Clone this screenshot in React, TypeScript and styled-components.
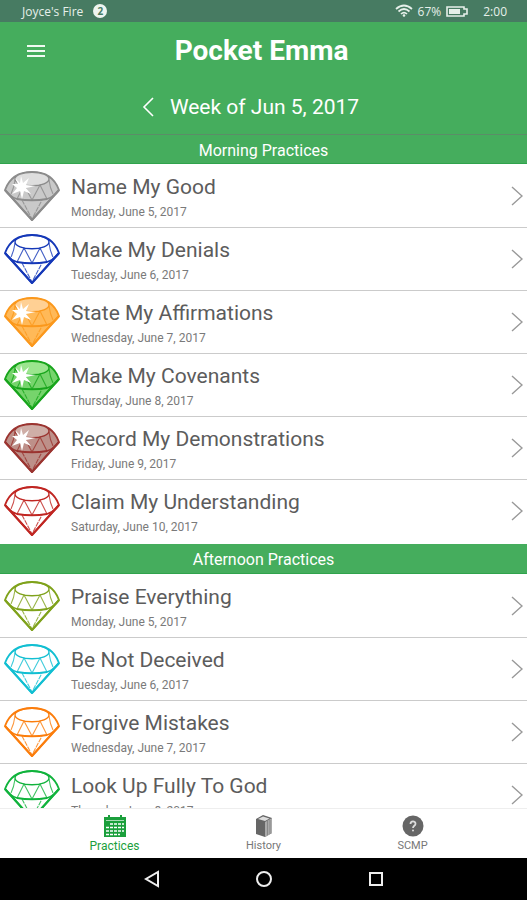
import React from "react";
import styled, { createGlobalStyle } from "styled-components";

const GREEN = "#45ad5d";

const GlobalStyle = createGlobalStyle`
  * { box-sizing: border-box; }
  body { margin: 0; background: #fff; font-family: Roboto, "Liberation Sans", sans-serif; }
  button { font: inherit; border: 0; background: none; padding: 0; cursor: pointer; }
  ul { list-style: none; margin: 0; }
  svg { display: block; }
`;

const Screen = styled.div`
  display: flex;
  flex-direction: column;
  height: 100vh;
`;

const StatusBar = styled.div`
  flex: none;
  display: flex;
  align-items: center;
  justify-content: space-between;
  height: 22px;
  padding: 0 20px 0 22px;
  background: #477b62;
  color: #e6f0ea;
  font-family: "Open Sans", "Noto Sans", sans-serif;
  font-size: 12px;
`;

const StatusGroup = styled.div<{ $gap: number }>`
  display: flex;
  align-items: center;
  gap: ${(p) => p.$gap}px;
`;

const Count = styled.span`
  display: grid;
  place-items: center;
  width: 14px;
  height: 14px;
  border-radius: 50%;
  background: #eef5f0;
  color: #477b62;
  font-size: 10px;
  font-weight: 700;
`;

const Clock = styled.time`
  margin-left: 10px;
`;

const Header = styled.header`
  flex: none;
  background: ${GREEN};
  color: #fff;
`;

const TitleBar = styled.div`
  display: grid;
  grid-template-columns: 72px 1fr 72px;
  align-items: center;
  height: 57px;
`;

const MenuButton = styled.button`
  display: grid;
  place-items: center;
  height: 44px;
  color: #fff;
`;

const Title = styled.h1`
  margin: 0;
  padding-right: 4px;
  text-align: center;
  font-size: 28px;
  line-height: 32px;
  font-weight: 700;
`;

const WeekBar = styled.div`
  display: flex;
  align-items: center;
  justify-content: center;
  gap: 16px;
  height: 55px;
  padding-right: 26px;
`;

const WeekButton = styled.button`
  color: #fff;
`;

const Week = styled.h2`
  margin: 0;
  font-size: 21px;
  line-height: 28px;
  font-weight: 400;
`;

const List = styled.main`
  flex: 1;
  min-height: 0;
  overflow: hidden;
`;

const SectionTitle = styled.h3<{ $ruled?: boolean }>`
  display: flex;
  align-items: center;
  justify-content: center;
  height: 30px;
  margin: 0;
  padding-top: 3px;
  border-top: ${(p) => (p.$ruled ? "1px solid #5b8d68" : "0")};
  border-bottom: 1px solid #2fa34c;
  background: ${GREEN};
  color: #fff;
  font-size: 16px;
  line-height: 20px;
  font-weight: 400;
`;

const Rows = styled.ul`
  padding: 1px 0;
`;

const Row = styled.li`
  border-bottom: 1px solid #cbcbcb;
  &:last-child { border-bottom-color: transparent; }
`;

const RowButton = styled.button`
  display: grid;
  grid-template-columns: 56px 1fr 12px;
  column-gap: 11px;
  align-items: center;
  width: 100%;
  height: 62px;
  padding: 0 4px;
  text-align: left;
`;

const RowText = styled.span`
  display: flex;
  flex-direction: column;
  padding-top: 4px;
`;

const Name = styled.span`
  color: #5c5c5c;
  font-size: 21px;
  line-height: 28px;
`;

const DateLine = styled.span`
  color: #7a7a7a;
  font-size: 12px;
  line-height: 22px;
`;

const TabBar = styled.nav`
  flex: none;
  display: flex;
  justify-content: center;
  height: 50px;
  border-top: 1px solid #eee;
  background: #fff;
  padding: 0 40px;
`;

const Tab = styled.button<{ $active?: boolean }>`
  flex: 1;
  display: flex;
  flex-direction: column;
  align-items: center;
  gap: 1px;
  padding-top: 6px;
  color: ${(p) => (p.$active ? "#1b9f3c" : "#777")};
  font-size: ${(p) => (p.$active ? 12 : 11)}px;
  font-weight: 400;
  line-height: 16px;
`;

const SystemBar = styled.nav`
  flex: none;
  display: flex;
  align-items: center;
  justify-content: center;
  gap: 94px;
  height: 42px;
  background: #000;
`;

interface GemProps {
  line: string;
  fill?: string;
  table?: string;
}

function Gem({ line, fill = "none", table = "none" }: GemProps) {
  return (
    <svg width="56" height="50" viewBox="0 0 56 50" fill="none" stroke={line} strokeLinejoin="round" aria-hidden="true">
      <path d="M1 19 C5 8 13 1 28 1 C43 1 51 8 55 19 L28 49 Z" fill={fill} strokeWidth="1.800" />
      <path d="M1 19 L28 49 L55 19" strokeWidth="2.200" />
      <ellipse cx="28" cy="8" rx="17" ry="6.800" fill={table} strokeWidth="1.400" />
      <path d="M1 19 Q6 26 13 28 Q28 30.500 43 28 Q50 26 55 19" strokeWidth="1.800" />
      <path d="M11 9 Q10 17 7 23 M45 9 Q46 17 49 23" strokeWidth="1.100" opacity="0.8" />
      <path
        d="M13 28 L20 14 L28 29 L36 14 L43 28"
        strokeWidth="1.100"
        opacity="0.8"
      />
      <path d="M18 29 L28 48 L38 29" strokeWidth="1.100" strokeDasharray="5 1" opacity="0.8" />
      {fill !== "none" && (
        <path
          d="M17 5 L19 12 L25 7 L22 14 L32 15 L22 17 L27 23 L20 20 L18 28 L16 20 L8 23 L13 17 L8 13 L14 13 L11 7 L16 12 Z"
          fill="#fff"
          stroke="none"
        />
      )}
    </svg>
  );
}

function Chevron({ left }: { left?: boolean }) {
  return (
    <svg width="12" height="20" viewBox="0 0 12 20" fill="none" stroke={left ? "#fff" : "#999"} strokeWidth={left ? 1.600 : 1.400} aria-hidden="true">
      <path d={left ? "M11 1 L2 10 L11 19" : "M1 1 L11 10 L1 19"} />
    </svg>
  );
}

interface Practice {
  name: string;
  date: string;
  gem: GemProps;
}

const morning: Practice[] = [
  { name: "Name My Good", date: "Monday, June 5, 2017", gem: { line: "#8b8b8b", fill: "#c9c9c9", table: "#dedede" } },
  { name: "Make My Denials", date: "Tuesday, June 6, 2017", gem: { line: "#1538b8" } },
  { name: "State My Affirmations", date: "Wednesday, June 7, 2017", gem: { line: "#fb981c", fill: "#ffb958", table: "#ffd094" } },
  { name: "Make My Covenants", date: "Thursday, June 8, 2017", gem: { line: "#18a51c", fill: "#76d46c", table: "#9be58e" } },
  { name: "Record My Demonstrations", date: "Friday, June 9, 2017", gem: { line: "#9b3430", fill: "#bd9089", table: "#cfaea7" } },
  { name: "Claim My Understanding", date: "Saturday, June 10, 2017", gem: { line: "#c02622" } },
];

const afternoon: Practice[] = [
  { name: "Praise Everything", date: "Monday, June 5, 2017", gem: { line: "#7fa21b" } },
  { name: "Be Not Deceived", date: "Tuesday, June 6, 2017", gem: { line: "#12bfd2" } },
  { name: "Forgive Mistakes", date: "Wednesday, June 7, 2017", gem: { line: "#fb7d0c" } },
  { name: "Look Up Fully To God", date: "Thursday, June 8, 2017", gem: { line: "#10b33c" } },
];

function PracticeRows({ items }: { items: Practice[] }) {
  return (
    <Rows>
      {items.map((p) => (
        <Row key={p.name}>
          <RowButton>
            <Gem {...p.gem} />
            <RowText>
              <Name>{p.name}</Name>
              <DateLine>{p.date}</DateLine>
            </RowText>
            <Chevron />
          </RowButton>
        </Row>
      ))}
    </Rows>
  );
}

export default function App() {
  return (
    <Screen>
      <GlobalStyle />
      <StatusBar>
        <StatusGroup $gap={10}>
          <span>Joyce's Fire</span>
          <Count>2</Count>
        </StatusGroup>
        <StatusGroup $gap={5}>
          <svg width="18" height="14" viewBox="0 0 18 14" fill="none" stroke="#e6f0ea" strokeWidth="1.700" aria-hidden="true">
            <path d="M1 5 Q9 -2 17 5 M3.500 7.500 Q9 2.500 14.500 7.500 M6 10 Q9 7.200 12 10" />
            <circle cx="9" cy="11.500" r="1.300" fill="#e6f0ea" stroke="none" />
          </svg>
          <span>67%</span>
          <svg width="22" height="11" viewBox="0 0 22 11" aria-hidden="true">
            <path d="M1 1 H18 V3 H21 V8 H18 V10 H1 Z" fill="none" stroke="#e6f0ea" strokeWidth="1.600" />
            <rect x="3" y="3" width="11" height="5" fill="#e6f0ea" />
          </svg>
          <Clock>2:00</Clock>
        </StatusGroup>
      </StatusBar>
      <Header>
        <TitleBar>
          <MenuButton aria-label="Menu">
            <svg width="18" height="12" viewBox="0 0 18 12" stroke="#f0faf2" strokeWidth="2" aria-hidden="true">
              <path d="M0 1 H18 M0 6 H18 M0 11 H18" />
            </svg>
          </MenuButton>
          <Title>Pocket Emma</Title>
        </TitleBar>
        <WeekBar>
          <WeekButton aria-label="Previous week">
            <Chevron left />
          </WeekButton>
          <Week>Week of Jun 5, 2017</Week>
        </WeekBar>
      </Header>
      <List>
        <SectionTitle $ruled>Morning Practices</SectionTitle>
        <PracticeRows items={morning} />
        <SectionTitle>Afternoon Practices</SectionTitle>
        <PracticeRows items={afternoon} />
      </List>
      <TabBar>
        <Tab $active>
          <svg width="22" height="22" viewBox="0 0 22 22" aria-hidden="true">
            <path d="M0 2 H22 V22 H0 Z" fill="#1b9f3c" />
            <path d="M4 0 H6 V3 H4 Z M16 0 H18 V3 H16 Z" fill="#1b9f3c" />
            <path d="M2 5.500 H20" stroke="#a9dcb5" strokeWidth="1" />
            <path d="M6 9 H20 M2 12.500 H20 M2 16 H20 M2 19.500 H16" stroke="#fff" strokeWidth="1.700" strokeDasharray="3 1" />
          </svg>
          Practices
        </Tab>
        <Tab>
          <svg width="18" height="22" viewBox="0 0 18 22" aria-hidden="true">
            <path d="M1 4 L8 0 L17 3 V18 L10 22 L1 19 Z" fill="#666" />
            <path d="M10 7 L17 3 V18 L10 22 Z" fill="#aaa" />
            <path d="M3 4 L8 1.500 L14.500 3.500 L10 6 Z" fill="#ddd" />
            <path d="M12.500 6 V20 M15 5 V19" stroke="#888" strokeWidth="1" />
          </svg>
          History
        </Tab>
        <Tab>
          <svg width="22" height="22" viewBox="0 0 22 22" fill="none" aria-hidden="true">
            <circle cx="11" cy="11" r="10.500" fill="#666" />
            <path d="M8.500 9 C8.500 5.500 13.500 5.700 13.500 8.700 C13.500 10.800 11 10.700 11 13" stroke="#ddd" strokeWidth="1.800" />
            <circle cx="11" cy="15.500" r="1" fill="#ddd" />
          </svg>
          SCMP
        </Tab>
      </TabBar>
      <SystemBar>
        <MenuButton aria-label="Back">
          <svg width="18" height="18" viewBox="0 0 18 18" fill="none" stroke="#eee" strokeWidth="2" aria-hidden="true">
            <path d="M15 2 V16 L3 9 Z" />
          </svg>
        </MenuButton>
        <MenuButton aria-label="Home">
          <svg width="18" height="18" viewBox="0 0 18 18" fill="none" stroke="#eee" strokeWidth="2" aria-hidden="true">
            <circle cx="9" cy="9" r="7" />
          </svg>
        </MenuButton>
        <MenuButton aria-label="Overview">
          <svg width="18" height="18" viewBox="0 0 18 18" fill="none" stroke="#eee" strokeWidth="2" aria-hidden="true">
            <rect x="3" y="3" width="12" height="12" />
          </svg>
        </MenuButton>
      </SystemBar>
    </Screen>
  );
}
